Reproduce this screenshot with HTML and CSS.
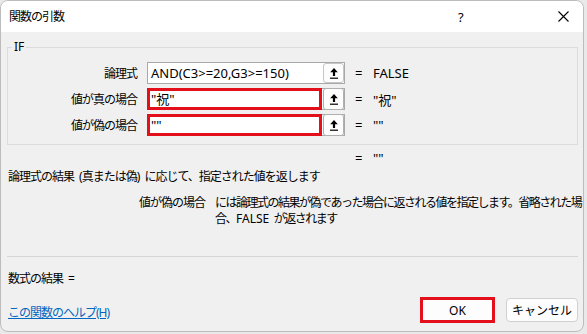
FILE: index.html
```html
<!DOCTYPE html>
<html lang="ja">
<head>
  <meta charset="UTF-8" />
  <title>関数の引数</title>
  <link rel="stylesheet" href="styles.css">
</head>
<body>

  <div class="window">
    <!-- Title bar -->
    <div class="titlebar">
      <span class="title">関数の引数</span>
      <span class="help-btn">?</span>
      <span class="close-btn">
        <svg width="11" height="11" viewBox="0 0 11 11"><path d="M0.5 0.5 L10.5 10.5 M10.5 0.5 L0.5 10.5" stroke="#000" stroke-width="1.1" fill="none"/></svg>
      </span>
    </div>

    <div class="content">
      <!-- Arguments group -->
      <fieldset class="group">
        <legend>IF</legend>

        <div class="arg-row">
          <span class="arg-label">論理式</span>
          <div class="field">
            <span class="field-text">AND(C3&gt;=20,G3&gt;=150)</span>
            <span class="ref-btn"><svg width="8" height="11" viewBox="0 0 8 11"><path d="M4 0 L7.8 4.2 H5.1 V8 H2.9 V4.2 H0.2 Z" fill="#000"/><rect x="0" y="9.6" width="8" height="1.2" fill="#000"/></svg></span>
          </div>
          <span class="eq">=</span>
          <span class="val">FALSE</span>
        </div>

        <div class="arg-row">
          <span class="arg-label">値が真の場合</span>
          <div class="field">
            <span class="field-text marked">"祝"</span>
            <span class="ref-btn"><svg width="8" height="11" viewBox="0 0 8 11"><path d="M4 0 L7.8 4.2 H5.1 V8 H2.9 V4.2 H0.2 Z" fill="#000"/><rect x="0" y="9.6" width="8" height="1.2" fill="#000"/></svg></span>
          </div>
          <span class="eq">=</span>
          <span class="val">"祝"</span>
        </div>

        <div class="arg-row">
          <span class="arg-label">値が偽の場合</span>
          <div class="field">
            <span class="field-text marked">""</span>
            <span class="ref-btn"><svg width="8" height="11" viewBox="0 0 8 11"><path d="M4 0 L7.8 4.2 H5.1 V8 H2.9 V4.2 H0.2 Z" fill="#000"/><rect x="0" y="9.6" width="8" height="1.2" fill="#000"/></svg></span>
          </div>
          <span class="eq">=</span>
          <span class="val">""</span>
        </div>
      </fieldset>

      <!-- Overall result -->
      <div class="arg-row result-row">
        <span></span>
        <span></span>
        <span class="eq">=</span>
        <span class="val">""</span>
      </div>

      <p class="func-desc">論理式の結果 (真または偽) に応じて、指定された値を返します</p>

      <div class="arg-desc">
        <span class="arg-name">値が偽の場合</span>
        <span class="arg-text">には論理式の結果が偽であった場合に返される値を指定します。省略された場<br>合、<span class="latin">FALSE</span> が返されます</span>
      </div>

      <hr class="divider">

      <div class="formula-result">数式の結果 =</div>

      <div class="footer">
        <a href="#" class="help-link">この関数のヘルプ(H)</a>
        <button class="btn btn-ok">OK</button>
        <button class="btn btn-cancel">キャンセル</button>
      </div>
    </div>
  </div>

</body>
</html>
```

FILE: styles.css
```css
* {
  margin: 0;
  padding: 0;
  box-sizing: border-box;
}

body {
  font-family: "Noto Sans", "Noto Sans CJK JP", sans-serif;
  font-size: 12px;
  letter-spacing: -1px;
  word-spacing: 3px;
  color: #000;
  background-color: #e9e9e9;
  width: 587px;
  height: 334px;
  overflow: hidden;
}

.window {
  width: 584px;
  height: 332px;
  background: #f0f0f0;
  border: 1px solid #bcbcbc;
  border-radius: 8px;
  overflow: hidden;
  display: flex;
  flex-direction: column;
}

/* Title bar */
.titlebar {
  height: 31px;
  background: #fff;
  display: flex;
  align-items: center;
  padding-left: 8px;
}

.title {
  flex: 1;
  font-size: 12px;
  margin-top: -1px;
}

.help-btn {
  width: 14px;
  font-size: 13px;
  letter-spacing: 0;
  margin-right: 86px;
}

.close-btn {
  display: flex;
  margin-right: 14px;
}

.content {
  padding: 0 5px 0 6px;
  flex: 1;
  display: flex;
  flex-direction: column;
}

/* Group box */
.group {
  margin-top: 8px;
  border: 1px solid #dcdcdc;
  padding: 8px 0 8px 0;
  display: flex;
  flex-direction: column;
  gap: 4px;
}

.group legend {
  margin-left: 4px;
  padding: 0 2px;
  line-height: 14px;
  font-size: 12px;
  letter-spacing: 0;
}

.arg-row {
  display: grid;
  grid-template-columns: 129px 198px 8px 1fr;
  column-gap: 10px;
  align-items: center;
  height: 22px;
}

.arg-label {
  text-align: right;
}

.field {
  display: flex;
  height: 22px;
  border: 1px solid #a9a9a9;
  background: #fff;
}

.field-text {
  flex: 1;
  font-size: 13px;
  letter-spacing: 0;
  word-spacing: 0;
  padding-left: 3px;
  line-height: 20px;
  white-space: nowrap;
  overflow: hidden;
}

/* red highlight around the edited arguments */
.field-text.marked {
  border: 3px solid #e3101c;
  margin: -1px 0 -1px -1px;
  padding-left: 1px;
  line-height: 16px;
}

.ref-btn {
  width: 21px;
  margin: 0 0 0 1px;
  border: 1px solid #c6c6c6;
  border-radius: 3px;
  background: #fdfdfd;
  display: flex;
  align-items: center;
  justify-content: center;
}

.field-text.marked + .ref-btn {
  margin-top: -1px;
  margin-bottom: -1px;
  border-color: #b0b0b0;
}

.eq,
.val {
  font-size: 13px;
  letter-spacing: 0;
}

.result-row {
  margin-top: 4px;
  height: 16px;
  padding-left: 1px;
}

.func-desc {
  margin-top: 4px;
  line-height: 16px;
  padding-left: 1px;
}

.arg-desc {
  margin-top: 10px;
  display: grid;
  grid-template-columns: 198px 1fr;
  column-gap: 10px;
  line-height: 16px;
}

.arg-name {
  text-align: right;
}

.arg-text {
  letter-spacing: -1.5px;
  white-space: nowrap;
}

.arg-text .latin {
  letter-spacing: 0;
}

.divider {
  margin-top: 29px;
  border: none;
  border-top: 1px solid #d6d6d6;
}

.formula-result {
  margin-top: 14px;
  line-height: 16px;
  padding-left: 1px;
}

.footer {
  margin-top: 10px;
  display: flex;
  align-items: center;
  padding-left: 1px;
}

.help-link {
  flex: 1;
  color: #0067c0;
  text-decoration: underline;
  margin-top: 3px;
}

.btn {
  font-family: "Noto Sans", "Noto Sans CJK JP", sans-serif;
  font-size: 12px;
  color: #000;
  background: #fdfdfd;
  cursor: pointer;
}

.btn-ok {
  width: 75px;
  height: 26px;
  border: 3px solid #e3101c;
  letter-spacing: 0;
}

.btn-cancel {
  width: 72px;
  height: 24px;
  margin-left: 11px;
  border: 1px solid #d0d0d0;
  border-radius: 4px;
}
```
